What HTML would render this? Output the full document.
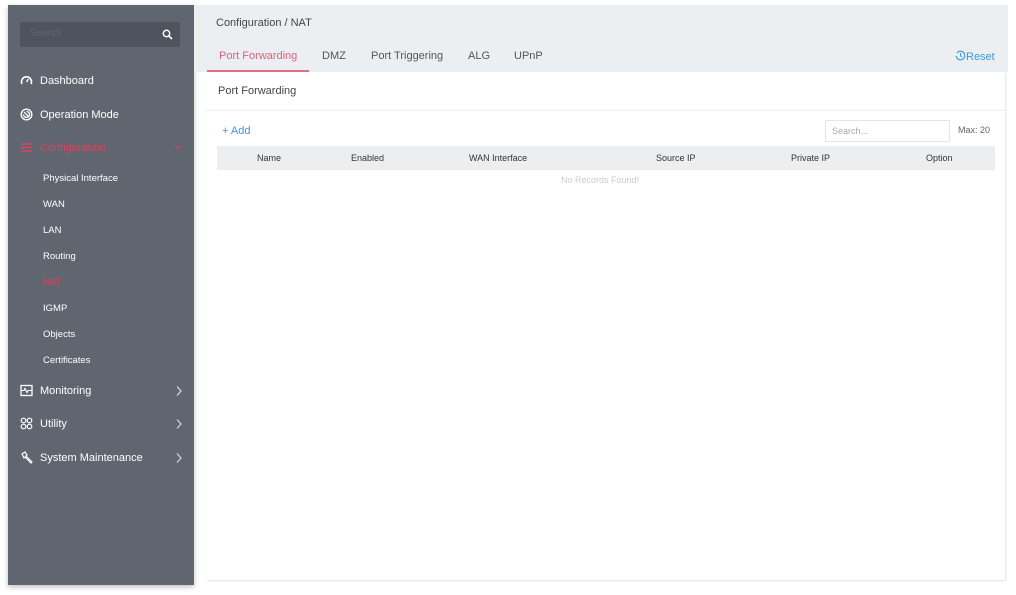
<!DOCTYPE html>
<html><head><meta charset="utf-8"><style>
*{box-sizing:border-box;margin:0;padding:0}
body{width:1016px;height:595px;background:#fff;font-family:"Liberation Sans",sans-serif;position:relative;overflow:hidden}
.side{position:absolute;left:8px;top:5px;width:186px;height:580px;background:#5f6670;box-shadow:0 2px 5px rgba(0,0,0,.25)}
.srch{position:absolute;left:12px;top:17px;width:160px;height:25px;background:#4d545d;border-radius:2px}
.srch span{position:absolute;left:10px;top:6px;font-size:10px;color:#5f666f}
.it{position:absolute;left:12px;font-size:11px;color:#fff;display:flex;align-items:center;gap:7px}
.it svg{width:13px;height:13px}
.sub{position:absolute;left:35px;font-size:9.5px;color:#fff}
.chev{position:absolute;left:167px;width:8px;height:12px}
.main{position:absolute;left:194px;top:5px;width:814px;height:67px;background:#eceff2}
.panel{position:absolute;left:206px;top:72px;width:799px;height:508px;background:#fff;box-shadow:1px 1px 2px rgba(0,0,0,.12)}
.t{position:absolute;font-size:11px;color:#555}
</style></head><body>
<div class="side">
 <div class="srch"><span>Search</span>
  <svg style="position:absolute;right:7px;top:7px" width="11" height="11" viewBox="0 0 11 11"><circle cx="4.5" cy="4.5" r="3.2" fill="none" stroke="#fff" stroke-width="1.5"/><line x1="7" y1="7" x2="10" y2="10" stroke="#fff" stroke-width="1.6"/></svg></div>
 <div class="it" style="top:69px"><svg viewBox="0 0 13 13"><path d="M2 10A5 5 0 1 1 11 10" fill="none" stroke="#fff" stroke-width="1.6"/><line x1="6.5" y1="8" x2="8.5" y2="5" stroke="#fff" stroke-width="1.4"/></svg>Dashboard</div>
 <div class="it" style="top:103px"><svg viewBox="0 0 13 13"><circle cx="6.5" cy="6.5" r="5.3" fill="none" stroke="#fff" stroke-width="1.4"/><path d="M4 4l5 5M6.5 3.5a3 3 0 1 1-3 3" fill="none" stroke="#fff" stroke-width="1.3"/></svg>Operation Mode</div>
 <div class="it" style="top:136px;color:#e0405e"><svg viewBox="0 0 13 13"><path d="M1 3h11M1 6.5h11M1 10h11" stroke="#e0405e" stroke-width="1.5"/></svg>Configuration</div>
 <svg class="chev" style="top:138px;left:165px;width:10px;height:8px" viewBox="0 0 10 8"><path d="M2 3l3 3 3-3" fill="none" stroke="#e0405e" stroke-width="1.2"/></svg>
 <div class="sub" style="top:168px">Physical Interface</div>
 <div class="sub" style="top:194px">WAN</div>
 <div class="sub" style="top:220px">LAN</div>
 <div class="sub" style="top:246px">Routing</div>
 <div class="sub" style="top:272px;color:#e0405e">NAT</div>
 <div class="sub" style="top:298px">IGMP</div>
 <div class="sub" style="top:324px">Objects</div>
 <div class="sub" style="top:350px">Certificates</div>
 <div class="it" style="top:379px"><svg viewBox="0 0 13 13"><rect x="1" y="1.5" width="11" height="10" fill="none" stroke="#fff" stroke-width="1.3"/><path d="M1 6.5h3l1-2 2 4 1-2h4" fill="none" stroke="#fff" stroke-width="1.1"/></svg>Monitoring</div>
 <svg class="chev" style="top:380px" viewBox="0 0 8 12"><path d="M2 1.5l4 4.5-4 4.5" fill="none" stroke="#d0d3d7" stroke-width="1.3"/></svg>
 <div class="it" style="top:412px"><svg viewBox="0 0 13 13"><g fill="none" stroke="#fff" stroke-width="1.2"><circle cx="3.5" cy="3.5" r="2.3"/><circle cx="9.5" cy="3.5" r="2.3"/><circle cx="3.5" cy="9.5" r="2.3"/><circle cx="9.5" cy="9.5" r="2.3"/></g></svg>Utility</div>
 <svg class="chev" style="top:413px" viewBox="0 0 8 12"><path d="M2 1.5l4 4.5-4 4.5" fill="none" stroke="#d0d3d7" stroke-width="1.3"/></svg>
 <div class="it" style="top:446px"><svg viewBox="0 0 13 13"><path d="M2 3l3-2 2 3-1 1 6 6-1 1-6-6-1 1z" fill="none" stroke="#fff" stroke-width="1.2"/></svg>System Maintenance</div>
 <svg class="chev" style="top:447px" viewBox="0 0 8 12"><path d="M2 1.5l4 4.5-4 4.5" fill="none" stroke="#d0d3d7" stroke-width="1.3"/></svg>
</div>
<div class="main"></div>
<div class="t" style="left:216px;top:17px;color:#444">Configuration / NAT</div>
<div class="t" style="left:219px;top:50px;color:#e0607a">Port Forwarding</div>
<div style="position:absolute;left:207px;top:70px;width:102px;height:2px;background:#e07088"></div>
<div class="t" style="left:322px;top:50px">DMZ</div>
<div class="t" style="left:371px;top:50px">Port Triggering</div>
<div class="t" style="left:468px;top:50px">ALG</div>
<div class="t" style="left:514px;top:50px">UPnP</div>
<div class="t" style="left:955px;top:50px;color:#3a9ad9"><svg width="11" height="11" viewBox="0 0 11 11" style="vertical-align:-1px"><path d="M2 3A4.3 4.3 0 1 1 1.2 6" fill="none" stroke="#3a9ad9" stroke-width="1.1"/><path d="M5.5 3v2.7l1.6 1.2" fill="none" stroke="#3a9ad9" stroke-width="1"/></svg>Reset</div>
<div class="panel">
 <div class="t" style="left:12px;top:13px;color:#444">Port Forwarding</div>
 <div style="position:absolute;left:0;top:38px;width:799px;height:1px;background:#eef0f2"></div>
 <div class="t" style="left:16px;top:53px;color:#3a9ad9">+ Add</div>
 <div style="position:absolute;left:619px;top:48px;width:125px;height:22px;border:1px solid #e3e5e8"><span style="position:absolute;left:6px;top:5px;font-size:9px;color:#aaa">Search...</span></div>
 <div class="t" style="left:752px;top:53px;font-size:9px;color:#666">Max: 20</div>
 <div style="position:absolute;left:11px;top:74px;width:778px;height:24px;background:#eceef0"></div>
 <div class="t" style="left:51px;top:81px;font-size:9px;color:#333">Name</div>
 <div class="t" style="left:145px;top:81px;font-size:9px;color:#333">Enabled</div>
 <div class="t" style="left:263px;top:81px;font-size:9px;color:#333">WAN Interface</div>
 <div class="t" style="left:450px;top:81px;font-size:9px;color:#333">Source IP</div>
 <div class="t" style="left:585px;top:81px;font-size:9px;color:#333">Private IP</div>
 <div class="t" style="left:720px;top:81px;font-size:9px;color:#333">Option</div>
 <div class="t" style="left:355px;top:103px;font-size:9px;color:#ccc">No Records Found!</div>
</div>
</body></html>
